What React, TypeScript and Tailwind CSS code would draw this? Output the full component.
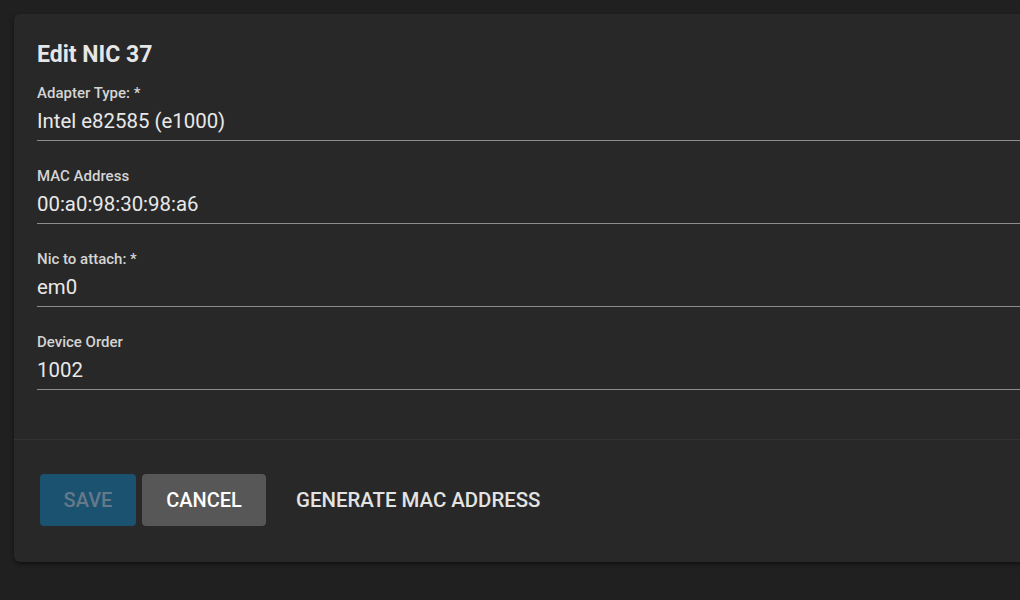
export default function App() {
  const fields = [
    { label: "Adapter Type: *", value: "Intel e82585 (e1000)" },
    { label: "MAC Address", value: "00:a0:98:30:98:a6" },
    { label: "Nic to attach: *", value: "em0" },
    { label: "Device Order", value: "1002" },
  ];
  return (
    <div
      className="w-[1020px] h-[600px] overflow-hidden bg-[#202020] pt-[14px] pl-[14px]"
      style={{ fontFamily: "Roboto, 'Liberation Sans', sans-serif" }}
    >
      <div className="w-[1100px] bg-[#282828] rounded-[6px] shadow-[0_2px_4px_rgba(0,0,0,0.5)]">
        <div className="pl-[23px] pt-[27px] pb-[49px]">
          <h2 className="text-[23px] leading-[28px] font-bold text-[#e6e6e6] mb-[15px]">
            Edit NIC 37
          </h2>
          <div className="flex flex-col gap-[26px]">
            {fields.map((f) => (
              <div key={f.label} className="border-b border-[#8c8c8c] pb-[7px]">
                <div className="text-[15px] leading-[18px] font-medium text-[#d4d4d4]">
                  {f.label}
                </div>
                <div className="mt-[7px] text-[20.4px] leading-[24px] text-[#e8e8e8]">
                  {f.value}
                </div>
              </div>
            ))}
          </div>
        </div>
        <div className="border-t border-[#333333] pl-[26px] pt-[34px] pb-[36px] flex items-center gap-[6px]">
          <button className="w-[96px] h-[52px] rounded-[4px] bg-[#1b5270] text-[#66798a] text-[20px] font-medium">
            SAVE
          </button>
          <button className="w-[124px] h-[52px] rounded-[4px] bg-[#575757] text-white text-[20px] font-medium">
            CANCEL
          </button>
          <button className="h-[52px] px-[24px] text-[#e3e3e3] text-[20.4px] font-medium">
            GENERATE MAC ADDRESS
          </button>
        </div>
      </div>
    </div>
  );
}
